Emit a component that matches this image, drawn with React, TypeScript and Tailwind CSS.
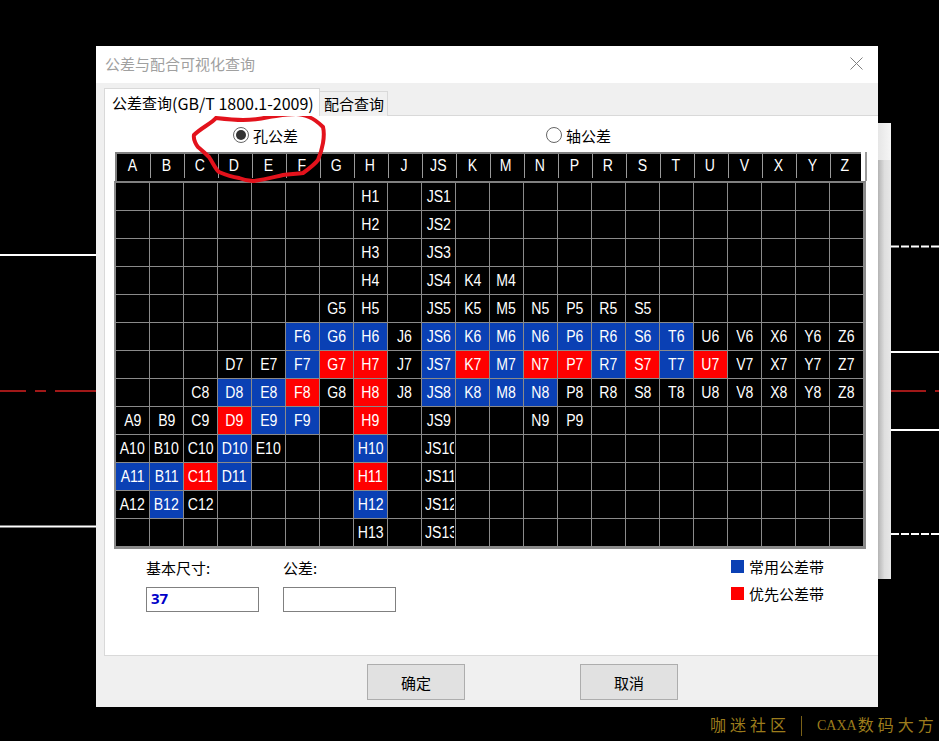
const columns = ["A", "B", "C", "D", "E", "F", "G", "H", "J", "JS", "K", "M", "N", "P", "R", "S", "T", "U", "V", "X", "Y", "Z"];

// which grades each column has
const grades: Record<string, number[]> = {
  A: [9, 10, 11, 12],
  B: [9, 10, 11, 12],
  C: [8, 9, 10, 11, 12],
  D: [7, 8, 9, 10, 11],
  E: [7, 8, 9, 10],
  F: [6, 7, 8, 9],
  G: [5, 6, 7, 8],
  H: [1, 2, 3, 4, 5, 6, 7, 8, 9, 10, 11, 12, 13],
  J: [6, 7, 8],
  JS: [1, 2, 3, 4, 5, 6, 7, 8, 9, 10, 11, 12, 13],
  K: [4, 5, 6, 7, 8],
  M: [4, 5, 6, 7, 8],
  N: [5, 6, 7, 8, 9],
  P: [5, 6, 7, 8, 9],
  R: [5, 6, 7, 8],
  S: [5, 6, 7, 8],
  T: [6, 7, 8],
  U: [6, 7, 8],
  V: [6, 7, 8],
  X: [6, 7, 8],
  Y: [6, 7, 8],
  Z: [6, 7, 8],
};

const common = ["F6", "G6", "H6", "JS6", "K6", "M6", "N6", "P6", "R6", "S6", "T6", "F7", "JS7", "M7", "R7", "T7", "D8", "E8", "JS8", "K8", "M8", "N8", "E9", "F9", "D10", "H10", "A11", "B11", "D11", "B12", "H12"];
const preferred = ["G7", "H7", "K7", "N7", "P7", "S7", "U7", "F8", "H8", "D9", "H9", "C11", "H11"];
const rows = [1, 2, 3, 4, 5, 6, 7, 8, 9, 10, 11, 12, 13];

function Cell({ col, grade }: { col: string; grade: number }) {
  const has = grades[col].includes(grade);
  const name = col + grade;
  let bg = "bg-black";
  if (common.includes(name)) bg = "bg-[#0a40b4]";
  if (preferred.includes(name)) bg = "bg-[#ff0000]";
  return (
    <div className={`h-[28px] w-[34px] border-r border-b border-[#8a8a8a] flex items-center justify-center overflow-hidden whitespace-nowrap ${bg}`}>
      {has && name.length > 3 && (
        <span className="block w-[29px] ml-[1px] overflow-hidden">
          <span className="inline-block origin-left scale-x-[0.88]">{name}</span>
        </span>
      )}
      {has && name.length <= 3 && <span className="inline-block shrink-0 scale-x-[0.88]">{name}</span>}
    </div>
  );
}

function Radio({ label, checked }: { label: string; checked?: boolean }) {
  return (
    <div className="flex items-center gap-[4px]">
      <div className="w-[16px] h-[16px] rounded-full border border-[#666] bg-white flex items-center justify-center">
        {checked && <div className="w-[10px] h-[10px] rounded-full bg-[#333]" />}
      </div>
      <span>{label}</span>
    </div>
  );
}

function CadLines() {
  return (
    <svg className="absolute left-0 top-0" width="939" height="741">
      <g stroke="#ffffff" strokeWidth="2">
        <line x1="0" y1="255" x2="96" y2="255" />
        <line x1="0" y1="526.5" x2="96" y2="526.5" />
        <line x1="891" y1="352" x2="939" y2="352" />
        <line x1="891" y1="430" x2="939" y2="430" />
        <line x1="891" y1="246.5" x2="939" y2="246.5" strokeDasharray="8 2" />
        <line x1="891" y1="534" x2="939" y2="534" strokeDasharray="8 2" />
      </g>
      <g stroke="#a01818" strokeWidth="2">
        <line x1="0" y1="391" x2="26" y2="391" />
        <line x1="35" y1="391" x2="46" y2="391" />
        <line x1="55" y1="391" x2="96" y2="391" />
        <line x1="891" y1="391" x2="926" y2="391" />
        <line x1="935" y1="391" x2="939" y2="391" />
      </g>
    </svg>
  );
}

export default function App() {
  return (
    <div className="relative w-[939px] h-[741px] bg-black overflow-hidden font-['Liberation_Sans','Noto_Sans_CJK_SC',sans-serif] text-[15px] leading-none text-black">
      <CadLines />

      {/* window behind the dialog */}
      <div className="absolute left-[878px] top-[123px] w-[13px] h-[456px] flex flex-col">
        <div className="h-[37px] bg-gradient-to-r from-[#e6e6e6] to-[#f6f6f6]" />
        <div className="flex-1 bg-gradient-to-r from-[#b4b4b4] via-[#dedede] to-[#e8e8e8]" />
      </div>

      <div className="absolute left-[96px] top-[46px] w-[782px] h-[661px] flex flex-col bg-[#f0f0f0]">
        <div className="h-[37px] bg-white flex items-center justify-between pl-[9px] pr-[15px] pb-[2px] text-[#a0a0a0] font-['Noto_Sans_CJK_SC',sans-serif]">
          <span>公差与配合可视化查询</span>
          <svg width="13" height="13" viewBox="0 0 13 13" stroke="#808080" strokeWidth="1">
            <line x1="0.5" y1="0.5" x2="12.5" y2="12.5" />
            <line x1="12.5" y1="0.5" x2="0.5" y2="12.5" />
          </svg>
        </div>

        <div className="flex items-end pl-[8px] h-[33px] font-['Noto_Sans_CJK_SC',sans-serif] relative z-10">
          <div className="w-[216px] h-[28px] bg-white border border-b-0 border-[#d9d9d9] pl-[7px] flex items-center whitespace-nowrap">
            公差查询<span className="text-[16px]">(GB/T 1800.1-2009)</span>
          </div>
          <div className="w-[68px] h-[25px] bg-[#f0f0f0] border border-b-0 border-l-0 border-[#d9d9d9] pl-[4px] pb-[2px] flex items-center">配合查询</div>
        </div>

        <div className="ml-[8px] flex-1 bg-white border-l border-t border-b border-[#d9d9d9] flex flex-col -mt-px">
          <div className="h-[36px] flex items-center pt-[2px] pl-[128px] gap-[248px] font-['Noto_Sans_CJK_SC',sans-serif]">
            <Radio label="孔公差" checked />
            <Radio label="轴公差" />
          </div>

          <div className="ml-[10px] w-[752px] text-white text-[16px] font-['Liberation_Sans',sans-serif]">
            <div className="h-[29px] flex">
              <div className="flex bg-black border-t-2 border-l-2 border-[#808080] w-[746px] pb-[3px]">
                {columns.map((c) => (
                  <div key={c} className="w-[34px] shrink-0 border-r border-[#9a9a9a] flex items-center justify-center pr-[3px] last:w-[30px] last:border-r-0 last:pr-[2px]">
                    <span className="inline-block scale-x-[0.88]">{c}</span>
                  </div>
                ))}
              </div>
              <div className="w-[4px]" />
              <div className="w-[2px] bg-[#9a9a9a]" />
            </div>
            <div className="border-2 border-[#8a8a8a] -ml-px w-[752px] border-t-[#808080] grid grid-cols-[repeat(22,34px)]">
              {rows.map((g) => columns.map((c) => <Cell key={c + g} col={c} grade={g} />))}
            </div>
          </div>

          <div className="flex mt-[10px] pl-[41px] font-['Noto_Sans_CJK_SC',sans-serif]">
            <div className="w-[137px]">
              <div className="h-[16px] flex items-center">基本尺寸:</div>
              <div className="mt-[12px] w-[113px] h-[25px] border border-[#808080] flex items-center pl-[4px] pb-[3px] font-bold text-[#0000c8] font-['Noto_Sans',sans-serif]">37</div>
            </div>
            <div className="w-[113px]">
              <div className="h-[16px] flex items-center">公差:</div>
              <div className="mt-[12px] w-[113px] h-[25px] border border-[#808080]" />
            </div>
            <div className="ml-[335px] flex flex-col gap-[12px]">
              <div className="flex items-center gap-[5px] h-[15px]">
                <div className="w-[13px] h-[13px] bg-[#0a40b4]" />
                <span>常用公差带</span>
              </div>
              <div className="flex items-center gap-[5px] h-[15px]">
                <div className="w-[13px] h-[13px] bg-[#ff0000]" />
                <span>优先公差带</span>
              </div>
            </div>
          </div>
        </div>

        <div className="h-[51px] flex items-start pt-[8px] pl-[271px] gap-[115px] font-['Noto_Sans_CJK_SC',sans-serif]">
          <button className="w-[98px] h-[36px] bg-[#e1e1e1] border border-[#adadad]">确定</button>
          <button className="w-[98px] h-[36px] bg-[#e1e1e1] border border-[#adadad]">取消</button>
        </div>
      </div>

      {/* hand drawn circle */}
      <svg className="absolute left-0 top-0 pointer-events-none" width="939" height="741" fill="none">
        <path
          d="M216 118 C212 123 201 128 194 135 C193 140 197 146 198 147 C204 152 207 155 209 157 C213 163 216 170 219 172 C226 175 232 177 239 178 C244 180 249 181 253 181 C264 180 274 177 283 175 C290 174 297 174 303 173 C310 168 315 164 318 160 C320 155 322 149 323 143 C324 137 324 131 323 127 C318 122 314 119 309 117 C304 115 300 114 296 114 C287 114 277 116 269 117 C260 119 251 120 243 120 C234 120 225 119 216 118 Z"
          stroke="#e3121c"
          strokeWidth="4"
        />
      </svg>

      <div className="absolute left-[710px] top-[716px] h-[20px] flex items-center text-[#9c7c1c] text-[16px] font-['Liberation_Serif','Noto_Sans_CJK_SC',serif] whitespace-nowrap">
        <span className="tracking-[4px]">咖迷社区</span>
        <span className="ml-[11px] w-px h-[20px] bg-[#7a6118]" />
        <span className="ml-[15px] text-[14px]">CAXA</span>
        <span className="ml-[1px] tracking-[4px]">数码大方</span>
      </div>
    </div>
  );
}
